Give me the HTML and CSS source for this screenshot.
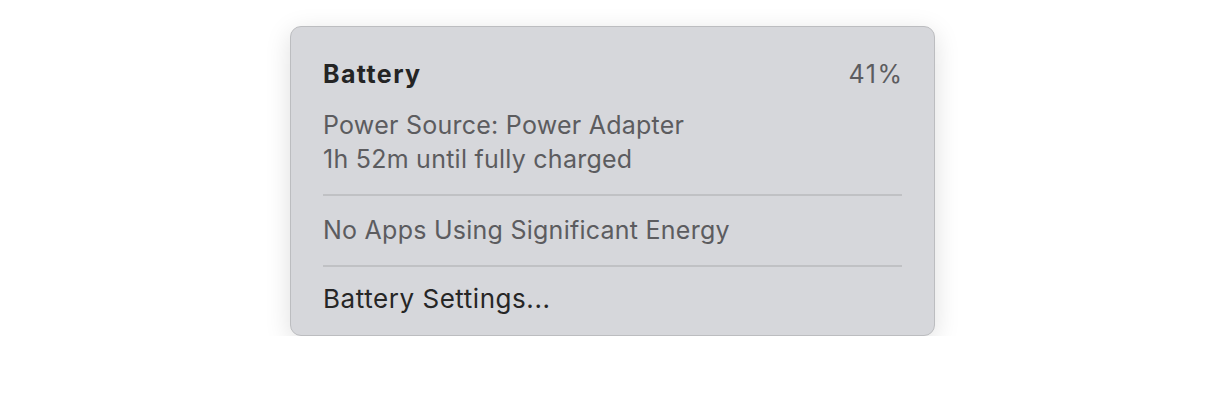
FILE: index.html
```html
<!DOCTYPE html>
<html>
<head>
  <title>Battery</title>
  <link rel="stylesheet" href="styles.css">
</head>
<body>
  <div class="menu">
    <div class="menu-header">
      <span class="menu-title">Battery</span>
      <span class="menu-value">41%</span>
    </div>
    <div class="menu-info">
      <div class="info-line">Power Source: Power Adapter</div>
      <div class="info-line">1h 52m until fully charged</div>
    </div>
    <div class="divider"></div>
    <div class="menu-note">No Apps Using Significant Energy</div>
    <div class="divider"></div>
    <div class="menu-item">Battery Settings...</div>
  </div>
</body>
</html>
```

FILE: styles.css
```css
body {
  font-family: 'Inter', 'Liberation Sans', sans-serif;
  background-color: #fff;
  margin: 0;
  padding: 26px 0 0 290px;
}

.menu {
  width: 645px;
  height: 310px;
  box-sizing: border-box;
  padding: 0 32px;
  background-color: #d6d7db;
  border: 1px solid #bcbdc0;
  border-radius: 11px;
  box-shadow: 0 6px 26px rgba(0, 0, 0, 0.13);
  font-size: 25px;
  letter-spacing: 0.25px;
}

.menu-header {
  display: flex;
  justify-content: space-between;
  align-items: baseline;
  padding-top: 32px;
  line-height: 30px;
}

.menu-title {
  font-weight: 700;
  color: #242424;
  letter-spacing: 1.4px;
}

.menu-value {
  color: #5c5c5f;
  letter-spacing: 1.6px;
  margin-right: -1.6px;
}

.menu-info {
  margin-top: 19px;
  line-height: 34px;
  color: #5c5c5f;
}

.divider {
  height: 2px;
  background-color: #c0c1c4;
  margin-top: 18px;
}

.menu-note {
  line-height: 34px;
  color: #5c5c5f;
  margin-top: 17px;
}

.menu-item {
  font-size: 26px;
  line-height: 34px;
  letter-spacing: 0.55px;
  color: #262626;
  margin-top: 15px;
}
```
